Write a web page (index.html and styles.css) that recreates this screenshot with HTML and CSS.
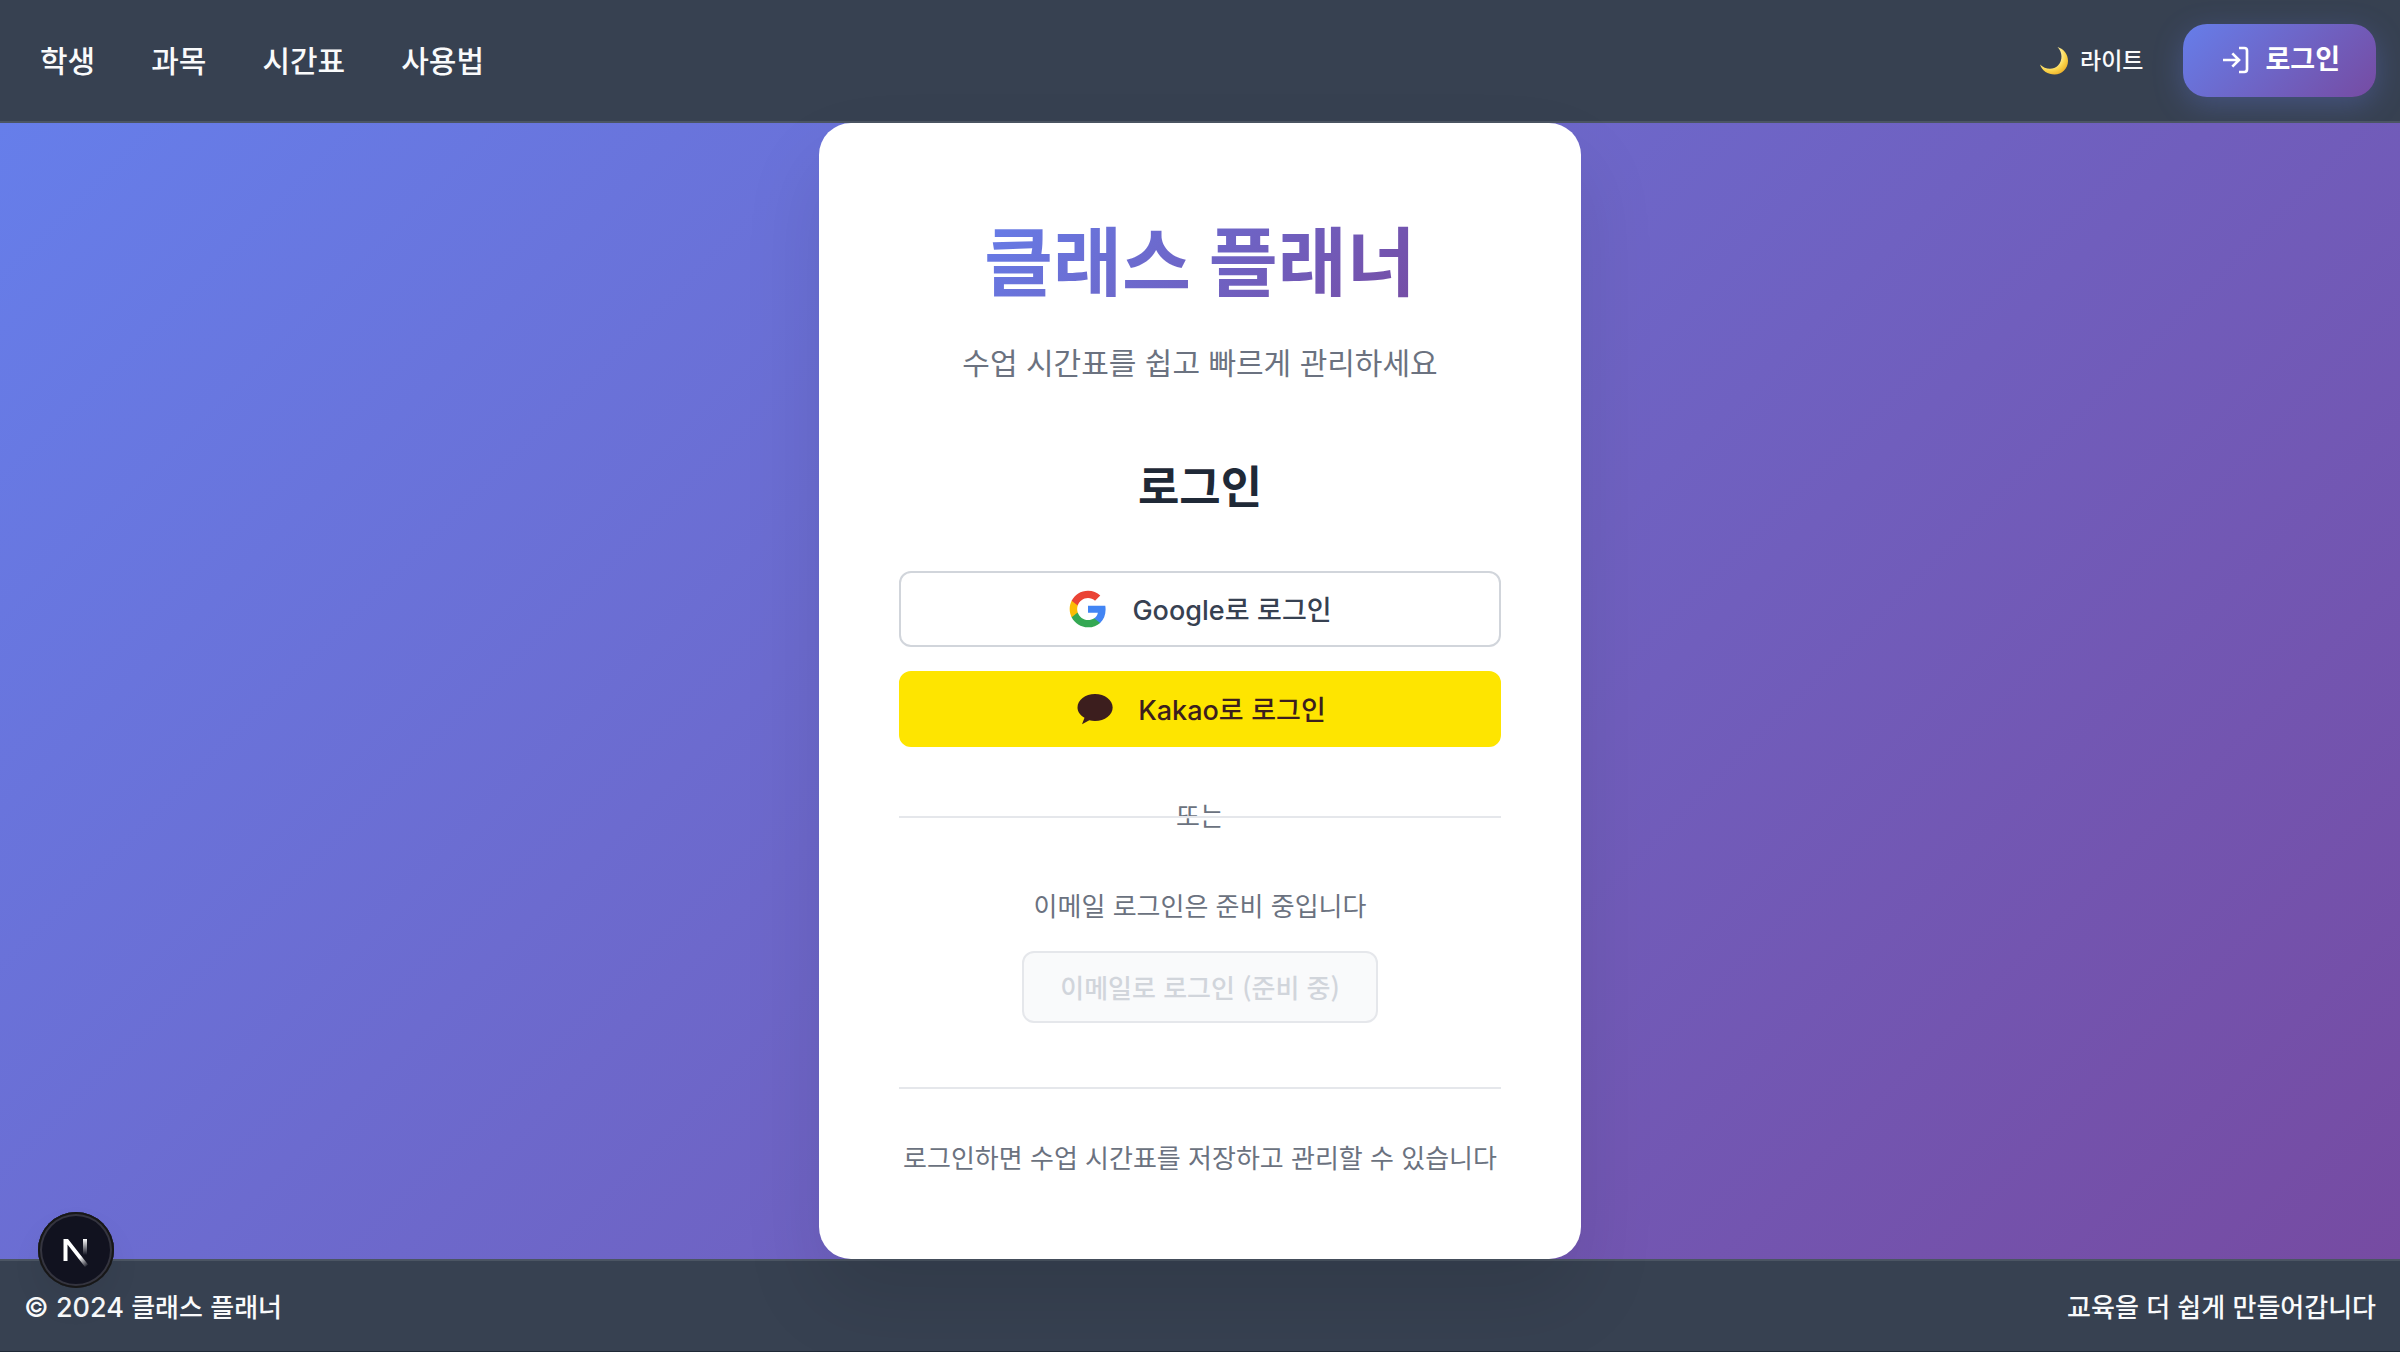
FILE: index.html
```html
<!DOCTYPE html>
<html lang="ko">
<head>
<meta charset="utf-8">
<meta name="viewport" content="width=device-width, initial-scale=1">
<title>클래스 플래너</title>
<link rel="stylesheet" href="styles.css">
</head>
<body>
<header class="site-header">
  <nav class="nav" aria-label="메인 메뉴">
    <a class="nav-link" href="#students">학생</a>
    <a class="nav-link" href="#subjects">과목</a>
    <a class="nav-link" href="#schedule">시간표</a>
    <a class="nav-link" href="#manual">사용법</a>
  </nav>
  <div class="header-actions">
    <button class="theme-toggle" type="button">
      <svg class="moon" viewBox="0 0 28 28" aria-hidden="true">
        <defs>
          <radialGradient id="moon-fill" cx="0.35" cy="0.3" r="0.75">
            <stop offset="0.5" stop-color="#fff0a0"/>
            <stop offset="0.75" stop-color="#fbd54b"/>
            <stop offset="1" stop-color="#eeb32b"/>
          </radialGradient>
        </defs>
        <path d="M17.500 0C24 2 28 7.500 28 14C28 21.500 22 27.500 14.500 27.500C8 27.500 2 24 0 17.500C5 22.500 13 23.500 18 18.500C23 13.500 22.500 5 17.500 0Z" fill="url(#moon-fill)"/>
      </svg>
      <span>라이트</span>
    </button>
    <a class="login-link" href="#login">
      <svg class="login-icon" viewBox="0 0 24 24" fill="none" stroke="currentColor" stroke-width="2" aria-hidden="true">
        <path d="M15 3h4a2 2 0 0 1 2 2v14a2 2 0 0 1-2 2h-4M10 17l5-5-5-5M15 12H3"/>
      </svg>
      <span>로그인</span>
    </a>
  </div>
</header>

<main class="hero">
  <section class="card">
    <h1 class="brand">클래스 플래너</h1>
    <p class="tagline">수업 시간표를 쉽고 빠르게 관리하세요</p>
    <h2 class="card-title">로그인</h2>
    <div class="providers">
      <button class="provider provider-google" type="button">
        <svg class="provider-icon" viewBox="0 0 24 24" aria-hidden="true">
          <path fill="#4285F4" d="M22.56 12.25c0-.78-.07-1.53-.2-2.25H12v4.26h5.92c-.26 1.37-1.04 2.53-2.21 3.31v2.77h3.57c2.080-1.920 3.280-4.740 3.280-8.090z"/>
          <path fill="#34A853" d="M12 23c2.970 0 5.460-.98 7.280-2.660l-3.570-2.770c-.98.66-2.230 1.060-3.710 1.060-2.860 0-5.290-1.930-6.160-4.530H2.180v2.840C3.990 20.530 7.700 23 12 23z"/>
          <path fill="#FBBC05" d="M5.840 14.090c-.22-.66-.35-1.360-.35-2.090s.13-1.430.35-2.090V7.070H2.180C1.430 8.550 1 10.220 1 12s.43 3.450 1.180 4.930l2.850-2.220.81-.62z"/>
          <path fill="#EA4335" d="M12 5.380c1.620 0 3.060.56 4.210 1.640l3.150-3.150C17.450 2.090 14.970 1 12 1 7.700 1 3.990 3.470 2.180 7.070l3.660 2.840c.87-2.600 3.300-4.530 6.160-4.530z"/>
        </svg>
        <span><span class="latin">Google</span>로 로그인</span>
      </button>
      <button class="provider provider-kakao" type="button">
        <svg class="provider-icon" viewBox="0 0 24 24" aria-hidden="true">
          <path fill="#3C1E1E" d="M12.600 3C18.500 3 23.200 6.600 23.200 11.100S18.500 19.200 12.600 19.200Q10.800 19.200 9.200 18.800L4.800 21.200L6.300 17.200C3.700 15.800 2.100 13.600 2.100 11.100C2.100 6.600 6.700 3 12.600 3Z"/>
        </svg>
        <span><span class="latin">Kakao</span>로 로그인</span>
      </button>
    </div>
    <div class="divider"><span>또는</span></div>
    <p class="email-note">이메일 로그인은 준비 중입니다</p>
    <button class="email-button" type="button" disabled>이메일로 로그인 (준비 중)</button>
    <hr class="rule">
    <p class="card-note">로그인하면 수업 시간표를 저장하고 관리할 수 있습니다</p>
  </section>
</main>

<footer class="site-footer">
  <span><span class="latin">© 2024</span> 클래스 플래너</span>
  <span>교육을 더 쉽게 만들어갑니다</span>
</footer>

<button class="dev-badge" type="button" aria-label="개발 도구 열기">
  <svg viewBox="0 0 76 76" aria-hidden="true">
    <defs>
      <linearGradient id="n-diagonal" gradientUnits="userSpaceOnUse" x1="38" y1="42" x2="49" y2="55">
        <stop offset="0.3" stop-color="#fff"/>
        <stop offset="1" stop-color="#fff" stop-opacity="0"/>
      </linearGradient>
      <linearGradient id="n-stem" gradientUnits="userSpaceOnUse" x1="0" y1="27" x2="0" y2="43">
        <stop offset="0" stop-color="#fff"/>
        <stop offset="1" stop-color="#fff" stop-opacity="0"/>
      </linearGradient>
    </defs>
    <path d="M25.500 27H30L50 52.500L47 55L29.500 32.500V49H25.500Z" fill="url(#n-diagonal)"/>
    <path d="M45 27H49V43H45Z" fill="url(#n-stem)"/>
  </svg>
</button>
</body>
</html>
```
FILE: styles.css
```css
* {
  box-sizing: border-box;
}

body {
  margin: 0;
  min-height: 100vh;
  display: flex;
  flex-direction: column;
  background: #1f2937;
  color: #f9fafb;
  font-family: "Noto Sans CJK KR", sans-serif;
  font-size: 26px;
  font-weight: 500;
  line-height: 44px;
}

h1,
h2,
p {
  margin: 0;
}

button {
  font: inherit;
}

a {
  color: inherit;
  text-decoration: none;
}

svg {
  display: block;
  flex: none;
}

.latin {
  font-family: Inter, sans-serif;
  font-size: 27px;
  line-height: 1;
}

.site-header {
  display: flex;
  align-items: center;
  justify-content: space-between;
  padding: 24px 24px 24px 40px;
  background: #374151;
  border-bottom: 2px solid #4b5563;
}

.nav {
  display: flex;
  gap: 56px;
  font-family: Inter, "Noto Sans CJK KR", sans-serif;
  font-size: 30px;
}

.header-actions {
  display: flex;
  align-items: center;
  gap: 40px;
}

.theme-toggle {
  display: flex;
  align-items: center;
  gap: 12px;
  padding: 0;
  border: 0;
  background: none;
  color: #f9fafb;
  font-family: Inter, "Noto Sans CJK KR", sans-serif;
  font-size: 23px;
}

.moon {
  width: 28px;
  height: 28px;
}

.login-link {
  display: flex;
  align-items: center;
  gap: 14px;
  padding: 14px 36px 15px;
  border-radius: 24px;
  background: linear-gradient(135deg, #667eea, #764ba2);
  box-shadow: 0 8px 30px rgba(102, 126, 234, 0.3);
  color: #fff;
  font-family: Inter, "Noto Sans CJK KR", sans-serif;
  font-size: 27px;
  font-weight: 700;
}

.login-icon {
  width: 32px;
  height: 32px;
}

.hero {
  display: flex;
  flex: 1;
  align-items: center;
  justify-content: center;
  background: linear-gradient(135deg, #667eea, #764ba2);
}

.card {
  position: relative;
  display: flex;
  flex-direction: column;
  align-items: center;
  width: 100%;
  max-width: 762px;
  padding: 80px;
  border-radius: 32px;
  background: #fff;
  box-shadow: 0 40px 80px rgba(0, 0, 0, 0.1);
  color: #6b7280;
  text-align: center;
  white-space: nowrap;
}

.brand {
  margin-bottom: 16px;
  background: linear-gradient(135deg, #667eea, #764ba2);
  background-clip: text;
  color: transparent;
  font-family: Inter, "Noto Sans CJK KR", sans-serif;
  font-size: 75px;
  font-weight: 700;
  line-height: 120px;
}

.tagline {
  margin-bottom: 73px;
  font-family: Inter, "Noto Sans CJK KR", sans-serif;
  font-size: 30px;
  font-weight: 400;
  line-height: 48px;
}

.card-title {
  margin-bottom: 55px;
  color: #1f2937;
  font-family: Inter, "Noto Sans CJK KR", sans-serif;
  font-size: 45px;
  font-weight: 600;
  line-height: 56px;
}

.providers {
  display: flex;
  flex-direction: column;
  gap: 24px;
  width: 100%;
}

.provider {
  display: flex;
  align-items: center;
  justify-content: center;
  gap: 24px;
  padding: 14px 32px;
  border: 2px solid #d1d5db;
  border-radius: 12px;
  background: #fff;
  color: #374151;
  font-size: 27px;
}

.provider-kakao {
  border-color: #fee500;
  background: #fee500;
  color: #3c1e1e;
}

.provider-icon {
  width: 40px;
  height: 40px;
}

.divider {
  position: relative;
  width: 100%;
  margin: 48px 0 44px;
  font-family: Inter, "Noto Sans CJK KR", sans-serif;
  font-weight: 400;
}

.divider::after {
  content: "";
  position: absolute;
  top: 50%;
  left: 0;
  right: 0;
  height: 2px;
  margin-top: -1px;
  background: #e5e7eb;
}

.email-note {
  margin-bottom: 24px;
  font-weight: 400;
}

.email-button {
  padding: 12px 36px;
  border: 2px solid #e5e7eb;
  border-radius: 12px;
  background: #f9fafb;
  color: #d1d5db;
}

.rule {
  width: 100%;
  height: 2px;
  margin: 64px 0 46px;
  border: 0;
  background: #e5e7eb;
}

.card-note {
  font-weight: 400;
}

.site-footer {
  display: flex;
  align-items: center;
  justify-content: space-between;
  margin-bottom: 1px;
  padding: 23px 24px;
  background: #374151;
  border-top: 2px solid #4b5563;
}

.dev-badge {
  position: fixed;
  left: 38px;
  bottom: 64px;
  width: 76px;
  height: 76px;
  padding: 0;
  border: 0;
  border-radius: 50%;
  background: #11121f;
  box-shadow: inset 0 0 0 2px #171717, inset 0 0 0 4px #34343f, 0 16px 32px rgba(0, 0, 0, 0.06);
}
```
